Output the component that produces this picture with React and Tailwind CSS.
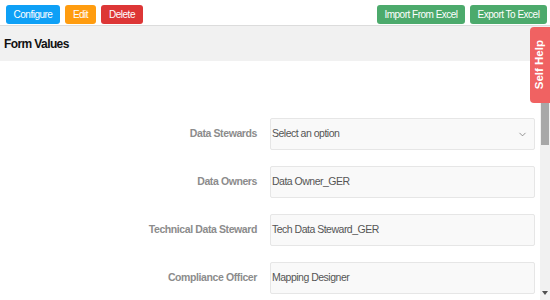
import { ChevronDown } from 'lucide-react'

const fields = [
  { label: 'Data Stewards', value: 'Select an option', select: true },
  { label: 'Data Owners', value: 'Data Owner_GER' },
  { label: 'Technical Data Steward', value: 'Tech Data Steward_GER' },
  { label: 'Compliance Officer', value: 'Mapping Designer' },
]

const Btn = ({ children, className }) => (
  <button className={`h-[19px] px-[4px] rounded-[3px] text-[10px] tracking-[-0.5px] leading-none text-white whitespace-nowrap ${className}`}>
    {children}
  </button>
)

export default function App() {
  return (
    <div className="relative w-[550px] h-[300px] overflow-hidden bg-white font-['Liberation_Sans',Arial,sans-serif]">
      {/* toolbar */}
      <div className="h-[26px] flex items-start pt-[5px] px-[6px] border-b border-[#dcdcdc]">
        <div className="flex gap-[5px]">
          <Btn className="bg-[#0ea0f6] w-[54px]">Configure</Btn>
          <Btn className="bg-[#ff9c0f] w-[31px]">Edit</Btn>
          <Btn className="bg-[#dd3636] w-[42px]">Delete</Btn>
        </div>
        <div className="ml-auto flex gap-[5px] mr-[-3px]">
          <Btn className="bg-[#4caa6c] w-[88px]">Import From Excel</Btn>
          <Btn className="bg-[#4caa6c] w-[77px]">Export To Excel</Btn>
        </div>
      </div>

      <div className="h-[35px] bg-[#f1f1f1] flex items-center px-[4px]">
        <span className="text-[12px] tracking-[-0.6px] font-bold text-[#111]">Form Values</span>
      </div>

      <div className="flex h-[239px]">
        <div className="flex-1 pt-[57px]">
          <div className="grid grid-cols-[257px_265px] gap-x-[13px] gap-y-[16px]">
            {fields.map((f) => (
              <div key={f.label} className="contents">
                <div className="h-[32px] flex items-center justify-end text-[10.5px] tracking-[-0.4px] font-bold text-[#8c8c8c]">
                  {f.label}
                </div>
                <div className="h-[32px] flex items-center pl-[1px] pr-[6px] bg-[#f9f9f9] border border-[#e6e6e6] rounded-[2px] text-[10.5px] tracking-[-0.5px] text-[#555]">
                  <span>{f.value}</span>
                  {f.select && <ChevronDown size={11} strokeWidth={1.5} className="ml-auto text-[#666]" />}
                </div>
              </div>
            ))}
          </div>
        </div>
        {/* scrollbar */}
        <div className="w-[10px] bg-[#f1f1f1] flex flex-col">
          <div className="h-[14px]" />
          <div className="mx-[1px] h-[70px] bg-[#a8a8a8]" />
          <div className="flex-1" />
          <div className="h-[14px] flex items-center justify-center">
            <div className="w-0 h-0 border-l-[3px] border-r-[3px] border-t-[4px] border-l-transparent border-r-transparent border-t-[#505050]" />
          </div>
        </div>
      </div>

      {/* self help tab */}
      <div className="absolute top-[27px] right-0 w-[20px] h-[76px] bg-[#f06262] rounded-l-[4px] flex items-center justify-center">
        <span className="-rotate-90 whitespace-nowrap text-[11.5px] font-bold text-white">Self Help</span>
      </div>
    </div>
  )
}
